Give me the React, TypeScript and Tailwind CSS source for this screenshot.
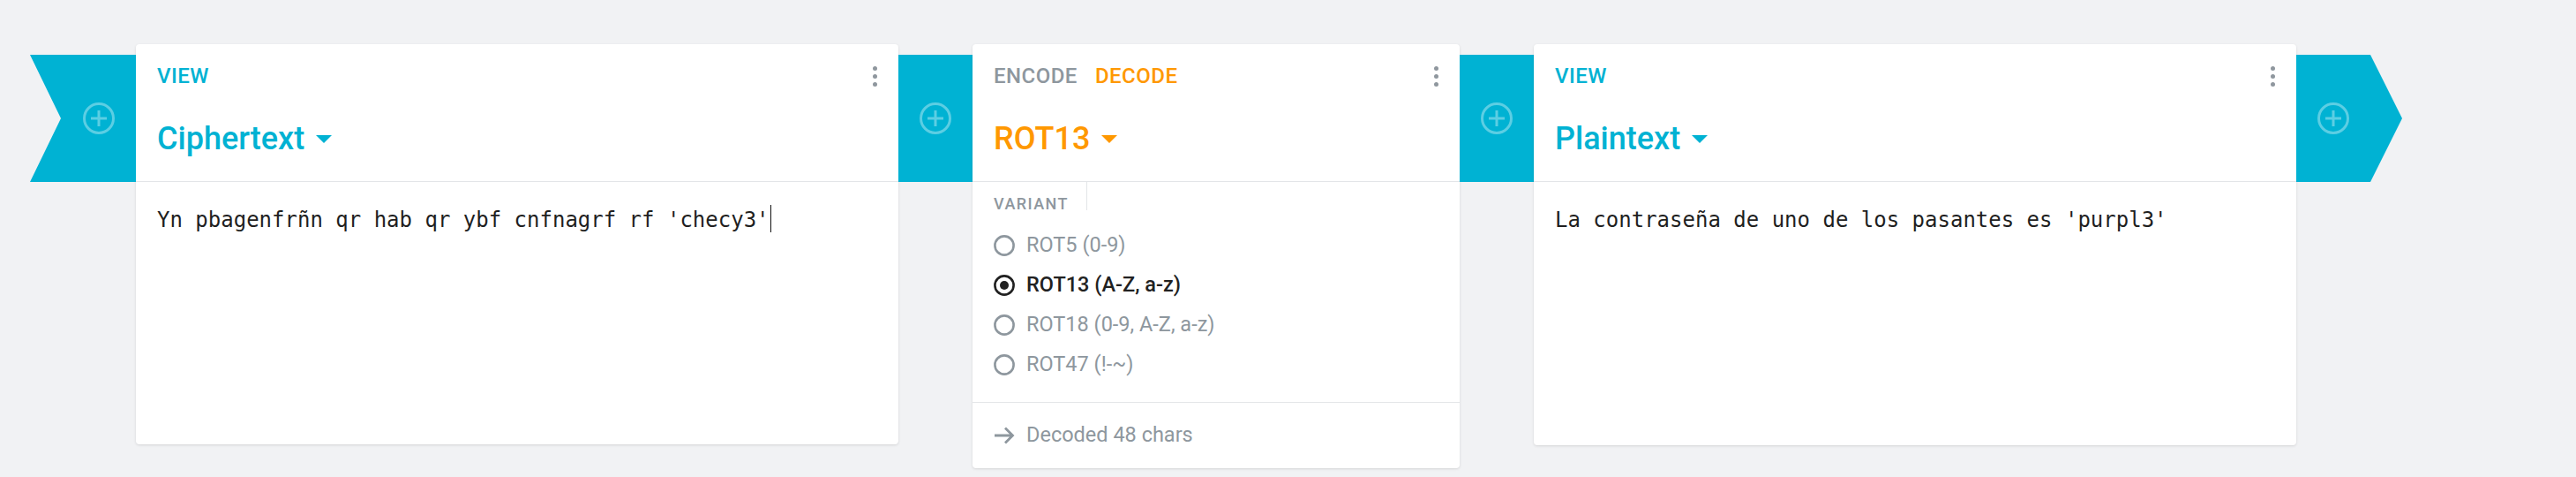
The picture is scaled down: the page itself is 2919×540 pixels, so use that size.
import React from "react";

const PlusCircle = () => (
  <svg width="36" height="36" viewBox="0 0 36 36" fill="none">
    <circle cx="18" cy="18" r="16.5" stroke="rgba(255,255,255,0.36)" strokeWidth="3" />
    <path d="M18 9v18M9 18h18" stroke="rgba(255,255,255,0.36)" strokeWidth="3" />
  </svg>
);

const Caret = ({ color }: { color: string }) => (
  <svg width="18" height="9" viewBox="0 0 18 9">
    <polygon points="0,0 18,0 9,9" fill={color} />
  </svg>
);

const Dots = () => (
  <div className="flex flex-col gap-[4px] w-[6px] items-center">
    <div className="w-[5px] h-[5px] rounded-full bg-[#8f979e]" />
    <div className="w-[5px] h-[5px] rounded-full bg-[#8f979e]" />
    <div className="w-[5px] h-[5px] rounded-full bg-[#8f979e]" />
  </div>
);

const Radio = ({ checked }: { checked: boolean }) => (
  <svg width="24" height="24" viewBox="0 0 24 24" fill="none">
    <circle cx="12" cy="12" r="10.6" stroke={checked ? "#212121" : "#8e979e"} strokeWidth="2.6" />
    {checked && <circle cx="12" cy="12" r="5" fill="#212121" />}
  </svg>
);

const ArrowRight = () => (
  <svg width="24" height="20" viewBox="0 0 24 20" fill="none">
    <path d="M1 10h21M13 1.5l8.5 8.5-8.5 8.5" stroke="#8e979e" strokeWidth="2.8" />
  </svg>
);

type HeaderProps = {
  label: React.ReactNode;
  title: string;
  color: string;
  titleClass: string;
};

const CardHeader: React.FC<HeaderProps> = ({ label, title, color, titleClass }) => (
  <div className="h-[156px] border-b border-[#e3e5e8] px-[24px] pt-[20px]">
    <div className="flex justify-between items-center h-[32px]">
      <div className="flex gap-[20px] text-[24px] leading-[32px] font-medium tracking-[0.02em]">{label}</div>
      <Dots />
    </div>
    <div className={"flex items-center gap-[13px] mt-[33px] h-[44px] text-[36px] leading-[44px] font-medium " + titleClass}>
      <span>{title}</span>
      <Caret color={color} />
    </div>
  </div>
);

const Cursor = () => (
  <span className="inline-block w-[1px] h-[31px] -mt-[3px] ml-[1px] bg-[#111] align-[-6px]" />
);

const variants = [
  { name: "ROT5 (0-9)", checked: false },
  { name: "ROT13 (A-Z, a-z)", checked: true },
  { name: "ROT18 (0-9, A-Z, a-z)", checked: false },
  { name: "ROT47 (!-~)", checked: false },
];

export default function App() {
  return (
    <div className="w-full h-[540px] bg-[#f1f2f4] overflow-hidden [font-family:Roboto,sans-serif]">
      <div className="flex items-start pt-[50px] pl-[34px]">
        <div className="w-[120px] h-[144px] mt-[12px] bg-[#00b2d3] flex items-center justify-end pr-[24px] [clip-path:polygon(0_0,100%_0,100%_100%,0_100%,35px_50%)]">
          <PlusCircle />
        </div>

        <div className="w-[864px] h-[453px] bg-white rounded-[4px] shadow-[0_1px_3px_rgba(0,0,0,0.12)] shrink-0">
          <CardHeader
            label={<span className="text-[#00b2d3]">VIEW</span>}
            title="Ciphertext"
            color="#00b2d3"
            titleClass="text-[#00b2d3]"
          />
          <div className="px-[24px] pt-[29px] text-[24px] leading-[28px] text-[#1f1f1f] whitespace-pre [font-family:'DejaVu_Sans_Mono',monospace]">
            Yn pbagenfrñn qr hab qr ybf cnfnagrf rf 'checy3'
            <Cursor />
          </div>
        </div>

        <div className="w-[84px] h-[144px] mt-[12px] bg-[#00b2d3] flex items-center justify-center shrink-0">
          <PlusCircle />
        </div>

        <div className="w-[552px] h-[480px] bg-white rounded-[4px] shadow-[0_1px_3px_rgba(0,0,0,0.12)] shrink-0 flex flex-col">
          <CardHeader
            label={
              <>
                <span className="text-[#8e979e]">ENCODE</span>
                <span className="text-[#ff9800]">DECODE</span>
              </>
            }
            title="ROT13"
            color="#ff9800"
            titleClass="text-[#ff9800]"
          />
          <div className="flex">
            <div className="h-[32px] pl-[24px] pr-[20px] pt-[16px] border-r border-[#e3e5e8] text-[18px] leading-none font-medium tracking-[0.08em] text-[#8e979e]">
              VARIANT
            </div>
          </div>
          <div className="flex flex-col pt-[17px] pb-[20px] px-[24px]">
            {variants.map((v) => (
              <div key={v.name} className="h-[45px] flex items-center gap-[13px]">
                <Radio checked={v.checked} />
                <span
                  className={
                    v.checked
                      ? "text-[23.5px] text-[#212121] font-medium"
                      : "text-[23.5px] text-[#8e979e]"
                  }
                >
                  {v.name}
                </span>
              </div>
            ))}
          </div>
          <div className="h-[75px] border-t border-[#e3e5e8] flex items-center gap-[13px] px-[24px]">
            <ArrowRight />
            <span className="text-[23.5px] text-[#8e979e]">Decoded 48 chars</span>
          </div>
        </div>

        <div className="w-[84px] h-[144px] mt-[12px] bg-[#00b2d3] flex items-center justify-center shrink-0">
          <PlusCircle />
        </div>

        <div className="w-[864px] h-[454px] bg-white rounded-[4px] shadow-[0_1px_3px_rgba(0,0,0,0.12)] shrink-0">
          <CardHeader
            label={<span className="text-[#00b2d3]">VIEW</span>}
            title="Plaintext"
            color="#00b2d3"
            titleClass="text-[#00b2d3]"
          />
          <div className="px-[24px] pt-[29px] text-[24px] leading-[28px] text-[#1f1f1f] whitespace-pre [font-family:'DejaVu_Sans_Mono',monospace]">
            La contraseña de uno de los pasantes es 'purpl3'
          </div>
        </div>

        <div className="w-[120px] h-[144px] mt-[12px] bg-[#00b2d3] flex items-center pl-[24px] shrink-0 [clip-path:polygon(0_0,84px_0,100%_50%,84px_100%,0_100%)]">
          <PlusCircle />
        </div>
      </div>
    </div>
  );
}
